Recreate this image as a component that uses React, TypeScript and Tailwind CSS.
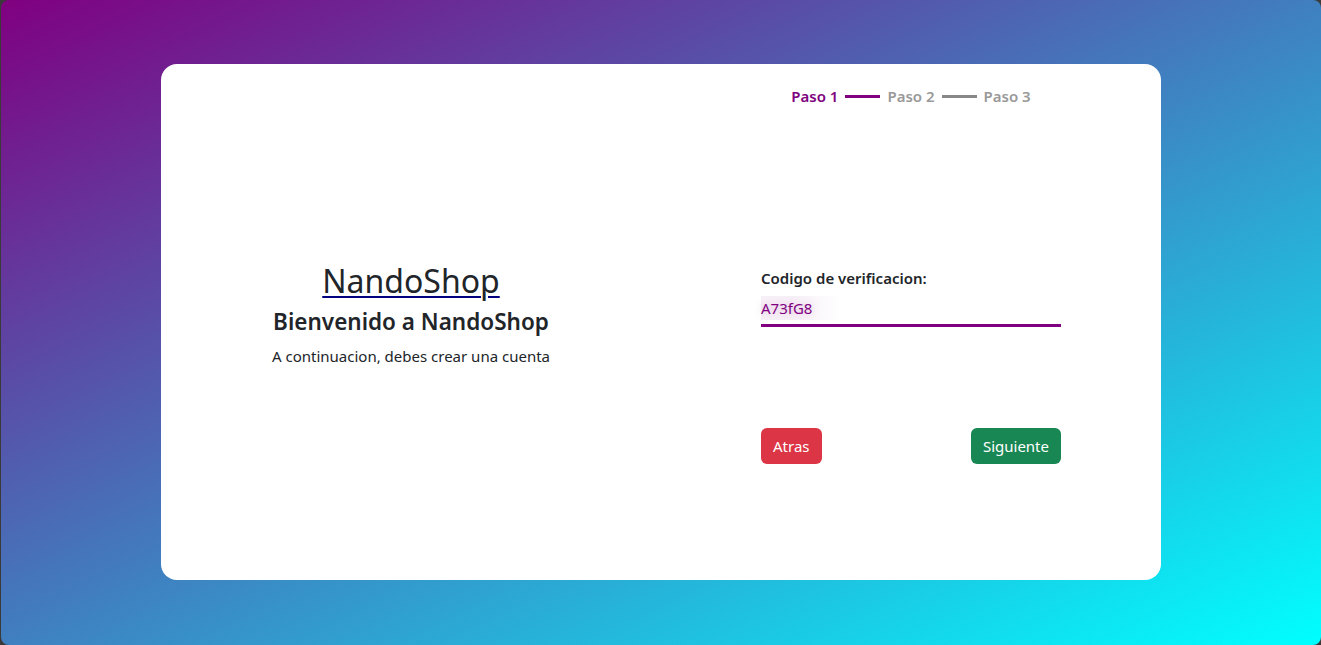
import React from "react";

const steps = ["Paso 1", "Paso 2", "Paso 3"];

export default function App() {
  const font = { fontFamily: '"Noto Sans", "Open Sans", sans-serif' };
  return (
    <div className="w-[1321px] h-[645px] bg-[#3a3a3a] pl-[1px]" style={font}>
      <div className="w-full h-full rounded-lg bg-[linear-gradient(to_bottom_right,#800080,#00ffff)] flex justify-center pt-[64px]">
        <div className="w-[1000px] h-[516px] bg-white rounded-2xl grid grid-cols-2 text-[#212529]">
          <div className="flex flex-col items-center pt-[198px]">
            <a href="#" className="text-[32px] leading-[38px] underline decoration-[#000080] decoration-2 underline-offset-[3px] text-[#212529]">
              NandoShop
            </a>
            <h2 className="text-[22.5px] leading-[30px] font-semibold mt-[7px]">
              Bienvenido a NandoShop
            </h2>
            <p className="text-[15px] leading-[24px] mt-[7px]">
              A continuacion, debes crear una cuenta
            </p>
          </div>
          <div className="flex flex-col px-[100px] pt-[21px]">
            <div className="flex items-center justify-center h-[22px] gap-[7px] text-[15px] font-semibold">
              {steps.map((s, i) => (
                <React.Fragment key={s}>
                  {i > 0 && (
                    <span className={"w-[35px] h-[3px] " + (i === 1 ? "bg-[#800080]" : "bg-[#888888]")} />
                  )}
                  <span className={i === 0 ? "text-[#800080]" : "text-[#999999]"}>{s}</span>
                </React.Fragment>
              ))}
            </div>
            <label className="mt-[159px] text-[15px] leading-[24px] font-semibold">
              Codigo de verificacion:
            </label>
            <div className="mt-[6px] border-b-[3px] border-[#800080] pb-[4px] text-[15px] leading-[24px] text-[#800080]">
              <span className="inline-block pr-[30px] bg-[linear-gradient(to_right,rgba(128,0,128,0.06)_40%,rgba(255,255,255,0))] [text-shadow:0_0_8px_rgba(128,0,128,0.25)]">
                A73fG8
              </span>
            </div>
            <div className="flex justify-between mt-[101px]">
              <button className="h-[36px] px-[12px] rounded-md bg-[#dc3545] text-white text-[15px]">Atras</button>
              <button className="h-[36px] px-[12px] rounded-md bg-[#198754] text-white text-[15px]">Siguiente</button>
            </div>
          </div>
        </div>
      </div>
    </div>
  );
}
